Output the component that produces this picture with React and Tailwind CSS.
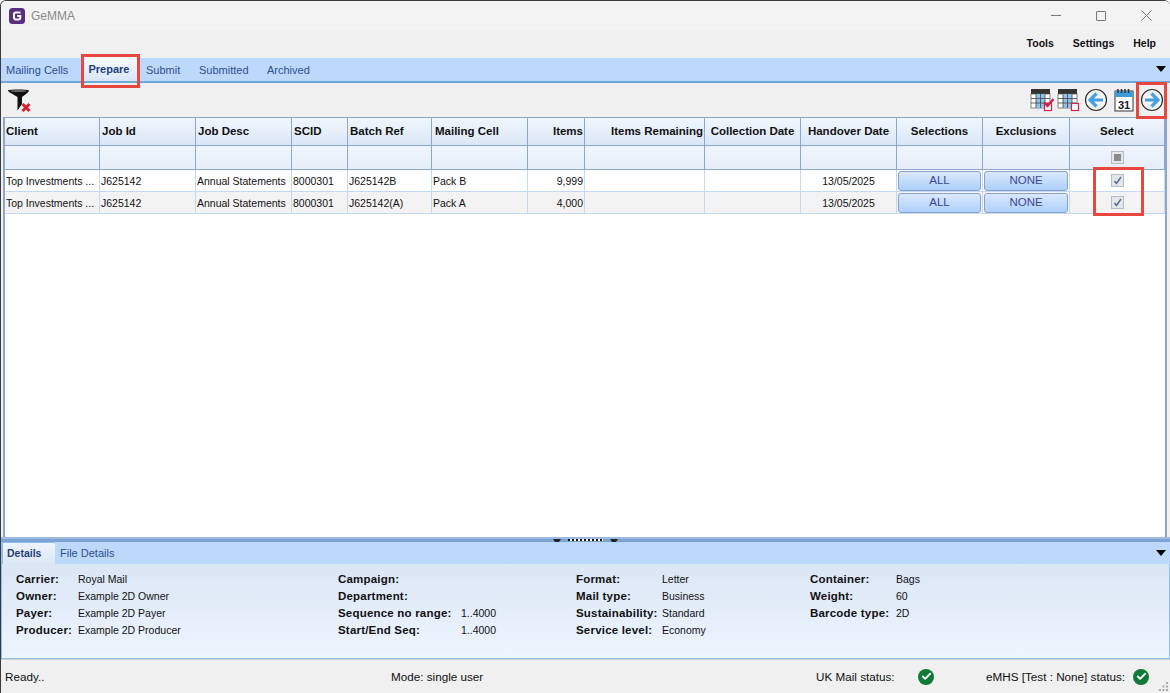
import { Check } from 'lucide-react';

const font = "font-['Liberation_Sans',Arial,sans-serif]";
const gridCols = 'grid grid-cols-[95px_96px_96px_56px_84px_96px_57px_120px_96px_96px_86px_87px_95px]';

const columns = [
  { label: 'Client', align: 'pl-[1px]' },
  { label: 'Job Id', align: 'pl-[2px]' },
  { label: 'Job Desc', align: 'pl-[2px]' },
  { label: 'SCID', align: 'pl-[2px]' },
  { label: 'Batch Ref', align: 'pl-[2px]' },
  { label: 'Mailing Cell', align: 'pl-[3px]' },
  { label: 'Items', align: 'justify-end pr-[1px]' },
  { label: 'Items Remaining', align: 'justify-end pr-[1px]' },
  { label: 'Collection Date', align: 'justify-center' },
  { label: 'Handover Date', align: 'justify-center' },
  { label: 'Selections', align: 'justify-center' },
  { label: 'Exclusions', align: 'justify-center' },
  { label: 'Select', align: 'justify-center' },
];

const rows = [
  { batch: 'J625142B', cell: 'Pack B', items: '9,999', bg: 'bg-white' },
  { batch: 'J625142(A)', cell: 'Pack A', items: '4,000', bg: 'bg-[#f3f3f3]' },
];

const details = [
  {
    width: 'w-[322px]',
    cols: 'grid-cols-[62px_1fr]',
    items: [
      ['Carrier:', 'Royal Mail'],
      ['Owner:', 'Example 2D Owner'],
      ['Payer:', 'Example 2D Payer'],
      ['Producer:', 'Example 2D Producer'],
    ],
  },
  {
    width: 'w-[238px]',
    cols: 'grid-cols-[123px_1fr]',
    items: [
      ['Campaign:', ''],
      ['Department:', ''],
      ['Sequence no range:', '1..4000'],
      ['Start/End Seq:', '1..4000'],
    ],
  },
  {
    width: 'w-[234px]',
    cols: 'grid-cols-[86px_1fr]',
    items: [
      ['Format:', 'Letter'],
      ['Mail type:', 'Business'],
      ['Sustainability:', 'Standard'],
      ['Service level:', 'Economy'],
    ],
  },
  {
    width: 'w-[200px]',
    cols: 'grid-cols-[86px_1fr]',
    items: [
      ['Container:', 'Bags'],
      ['Weight:', '60'],
      ['Barcode type:', '2D'],
    ],
  },
];

const Logo = () => (
  <svg width="16" height="16" viewBox="0 0 16 16">
    <rect width="16" height="16" rx="3.5" fill="#5b2d82" />
    <path d="M11.5 4.6H6.8C5.6 4.6 5 5.3 5 6.4v3.2c0 1.1.6 1.8 1.8 1.8h3c.9 0 1.5-.5 1.5-1.4V8H8.2" fill="none" stroke="#fff" strokeWidth="2" />
  </svg>
);

const FilterClear = () => (
  <svg width="26" height="26" viewBox="0 0 26 26">
    <path d="M1 2.5C1 1 22 1 22 2.5c0 1.500-3 3.500-7 6.500v7l-4.500 6.500V9C6 6 1 4 1 2.500Z" fill="#111" />
    <ellipse cx="11.500" cy="3" rx="8" ry="1" fill="#666" />
    <path d="M15.500 16l7 7M22.500 16l-7 7" stroke="#d5202e" strokeWidth="3" />
  </svg>
);

const GridIcon = ({ checked }) => (
  <svg width="24" height="24" viewBox="0 0 24 24">
    <rect x="1" y="1" width="19" height="5" fill="#333" />
    <rect x="1" y="6" width="19" height="14" fill="#fff" stroke="#555" strokeWidth="0.7" />
    <rect x="6" y="6" width="9" height="14" fill="#8fc4ea" />
    <path d="M1 10.500h19M1 15h19M6 6v14M10.500 6v14M15 6v14" stroke="#444" strokeWidth="0.8" />
    <rect x="14.500" y="15.500" width="7" height="7" fill="#fff" stroke="#d5204a" strokeWidth="1.200" />
    {checked && <path d="M14 14.500l3.500 3.500 6-7" fill="none" stroke="#d5204a" strokeWidth="2.400" />}
  </svg>
);

const ArrowIcon = ({ right }) => (
  <svg width="24" height="24" viewBox="0 0 24 24">
    <circle cx="12" cy="12" r="10.500" fill="#f4f4f4" stroke="#333" strokeWidth="1.200" />
    <g transform={right ? 'rotate(180 12 12)' : undefined}>
      <path d="M12.500 5.500L6 12l6.500 6.500M6.500 12H19" fill="none" stroke="#45a0e0" strokeWidth="3.200" />
    </g>
  </svg>
);

const CalendarIcon = () => (
  <svg width="20" height="24" viewBox="0 0 20 24">
    <rect x="1" y="3" width="18" height="20" fill="#fff" stroke="#333" />
    <rect x="1" y="3" width="18" height="6" fill="#3e9ad8" />
    <path d="M4 1v4M7.500 1v4M11 1v4M14.500 1v4" stroke="#333" strokeWidth="1.500" />
    <text x="10" y="20.500" textAnchor="middle" fontSize="11" fontWeight="700" fontFamily="Liberation Sans" fill="#222">31</text>
  </svg>
);

const SelectBox = ({ mode }) => (
  <span className="flex h-[13px] w-[13px] items-center justify-center border border-[#b4bcc8] bg-[#e3e6eb]">
    {mode === 'mixed' && <span className="h-[7px] w-[7px] bg-[#8c8c8c]" />}
    {mode === 'checked' && (
      <svg width="9" height="9" viewBox="0 0 9 9">
        <path d="M1.500 5l2 2.500L8 1" fill="none" stroke="#5d6f96" strokeWidth="1.500" />
      </svg>
    )}
  </span>
);

const RowButton = ({ children }) => (
  <button className="mx-[1px] flex h-[20px] flex-1 items-center justify-center rounded-[3px] border border-[#8aa3c4] bg-gradient-to-b from-[#d9e8fc] to-[#aed0fb] text-[11.500px] text-[#3f4596]">
    {children}
  </button>
);

const StatusCheck = () => (
  <span className="flex h-4 w-4 items-center justify-center rounded-full bg-[#0f7a35]">
    <Check size={11} strokeWidth={4} color="#fff" />
  </span>
);

const Marker = () => (
  <span className="h-0 w-0 border-x-[4px] border-t-[6px] border-x-transparent border-t-[#222]" />
);

const App = () => {
  return (
    <div className={`${font} relative flex h-[693px] w-[1170px] flex-col overflow-hidden rounded-t-[6px] border-l border-t border-[#3a3a40] bg-[#f0f0f0] text-[10.500px] text-[#111]`}>
      <div className="flex h-[29px] shrink-0 items-center bg-[#f3f3f3] pl-[8px] pr-[18px]">
        <Logo />
        <span className="ml-[6px] text-[12px] text-[#8a8a8a]">GeMMA</span>
        <div className="ml-auto flex items-center gap-[35px]">
          <span className="h-[1px] w-[10px] bg-[#777]" />
          <span className="h-[10px] w-[10px] rounded-[1px] border border-[#777]" />
          <svg width="11" height="11" viewBox="0 0 11 11">
            <path d="M.5.5l10 10M10.500.5l-10 10" stroke="#777" />
          </svg>
        </div>
      </div>

      <div className="flex h-[28px] shrink-0 items-center justify-end gap-[19px] pr-[14px] font-bold">
        <span>Tools</span>
        <span>Settings</span>
        <span>Help</span>
      </div>

      <div className="flex h-[25px] shrink-0 items-end border-b-2 border-[#6fa8d8] bg-[#bcd9fb] pl-[1px] pr-[4px] text-[11px] text-[#2c4f91]">
        <span className="flex h-[22px] w-[79px] items-center pl-[4px]">Mailing Cells</span>
        <span className="flex h-[23px] w-[56px] items-center justify-center rounded-t-[2px] bg-gradient-to-b from-[#f6f9fe] to-[#d8e6f8] font-bold text-[#1f3f7a]">Prepare</span>
        <span className="flex h-[22px] w-[56px] items-center pl-[9px]">Submit</span>
        <span className="flex h-[22px] w-[68px] items-center pl-[6px]">Submitted</span>
        <span className="flex h-[22px] items-center pl-[6px]">Archived</span>
        <span className="ml-auto mb-[9px] h-0 w-0 border-x-[5px] border-t-[6px] border-x-transparent border-t-black" />
      </div>

      <div className="flex h-[34px] shrink-0 items-center pl-[6px] pr-[6px]">
        <span className="mt-[2px]"><FilterClear /></span>
        <div className="ml-auto flex items-center">
          <GridIcon checked />
          <span className="ml-[3px]"><GridIcon /></span>
          <span className="ml-[3px]"><ArrowIcon /></span>
          <span className="ml-[6px]"><CalendarIcon /></span>
          <span className="ml-[6px]"><ArrowIcon right /></span>
        </div>
      </div>

      <div className="ml-[2px] mr-[3px] min-h-0 flex-1 border-x-2 border-t border-[#8ea6c8] bg-white">
        <div className={`${gridCols} h-[28px] border-b border-[#8ea6c8] bg-gradient-to-b from-[#f1f6fd] to-[#dbe7f7] text-[11.500px] font-bold`}>
          {columns.map(col => (
            <div key={col.label} className={`flex items-center border-r border-[#8ea6c8] ${col.align}`}>
              {col.label}
            </div>
          ))}
        </div>
        <div className={`${gridCols} h-[24px] border-b border-[#8ea6c8] bg-gradient-to-b from-[#f1f5fc] to-[#e6eefa]`}>
          {columns.map(col => (
            <div key={col.label} className="flex items-center justify-center border-r border-[#8ea6c8]">
              {col.label === 'Select' && <SelectBox mode="mixed" />}
            </div>
          ))}
        </div>
        {rows.map(row => (
          <div key={row.batch} className={`${gridCols} h-[22px] border-b border-[#c3d8f3] ${row.bg}`}>
            <div className="flex items-center border-r border-[#c3d8f3] pl-[1px] pt-[2px]">Top Investments ...</div>
            <div className="flex items-center border-r border-[#c3d8f3] pl-[1px] pt-[2px]">J625142</div>
            <div className="flex items-center border-r border-[#c3d8f3] pl-[1px] pt-[2px]">Annual Statements</div>
            <div className="flex items-center border-r border-[#c3d8f3] pl-[1px] pt-[2px]">8000301</div>
            <div className="flex items-center border-r border-[#c3d8f3] pl-[1px] pt-[2px]">{row.batch}</div>
            <div className="flex items-center border-r border-[#c3d8f3] pl-[1px] pt-[2px]">{row.cell}</div>
            <div className="flex items-center justify-end border-r border-[#c3d8f3] pr-[1px] pt-[2px]">{row.items}</div>
            <div className="border-r border-[#c3d8f3]" />
            <div className="border-r border-[#c3d8f3]" />
            <div className="flex items-center justify-center border-r border-[#c3d8f3] pt-[2px]">13/05/2025</div>
            <div className="flex items-center border-r border-[#c3d8f3]"><RowButton>ALL</RowButton></div>
            <div className="flex items-center border-r border-[#c3d8f3]"><RowButton>NONE</RowButton></div>
            <div className="flex items-center justify-center border-r border-[#c3d8f3]"><SelectBox mode="checked" /></div>
          </div>
        ))}
      </div>

      <div className="flex h-[5px] shrink-0 items-start justify-center gap-[7px] border-t-2 border-[#9dbbe0] bg-[#7ba3d6]">
        <Marker />
        <span className="h-[2px] w-[35px] bg-[repeating-linear-gradient(90deg,#111_0,#111_2px,#fff_2px,#fff_4px)]" />
        <Marker />
      </div>

      <div className="flex h-[22px] shrink-0 items-end bg-[#bcd9fb] pr-[4px] text-[11px] text-[#2c4f91]">
        <span className="flex h-[22px] w-[54px] items-center rounded-tr-[2px] border-l-2 border-t border-[#8fbfe6] bg-gradient-to-b from-[#eef4fc] to-[#dbe6f5] pl-[4px] text-[10.500px] font-bold text-[#1f3f7a]">Details</span>
        <span className="flex h-[22px] items-center pl-[5px]">File Details</span>
        <span className="ml-auto mb-[8px] h-0 w-0 border-x-[5px] border-t-[6px] border-x-transparent border-t-black" />
      </div>

      <div className="flex h-[95px] shrink-0 border-x border-b border-[#8fbfe6] bg-gradient-to-b from-[#dbe6f5] to-[#edf5fe] pl-[14px] pt-[7px]">
        {details.map((group, i) => (
          <div key={i} className={`grid content-start ${group.cols} ${group.width} auto-rows-[17px]`}>
            {group.items.map(([label, value]) => (
              <div key={label} className="contents">
                <span className="flex items-center whitespace-nowrap text-[11.500px] font-bold tracking-[0.2px]">{label}</span>
                <span className="flex items-center">{value}</span>
              </div>
            ))}
          </div>
        ))}
      </div>

      <div className="flex h-[34px] shrink-0 items-center border-t border-[#cfcfcf] pl-[4px] text-[11.700px]">
        <span className="w-[386px]">Ready..</span>
        <span className="w-[425px]">Mode: single user</span>
        <span className="w-[102px]">UK Mail status:</span>
        <StatusCheck />
        <span className="ml-[52px] w-[147px]">eMHS [Test : None] status:</span>
        <StatusCheck />
      </div>

      <svg className="absolute bottom-[1px] right-[1px]" width="11" height="11" viewBox="0 0 11 11">
        <path d="M8 1h2v2H8zM4.500 4.500h2v2h-2zM8 4.500h2v2H8zM1 8h2v2H1zM4.500 8h2v2h-2zM8 8h2v2H8z" fill="#a8a8a8" />
      </svg>

      <div className="absolute left-[80px] top-[53px] h-[34px] w-[59px] border-[3px] border-[#e8473f]" />
      <div className="absolute left-[1135px] top-[81px] h-[37px] w-[31px] border-[3px] border-[#e8473f]" />
      <div className="absolute left-[1092px] top-[166px] h-[49px] w-[51px] border-[3px] border-[#e8473f]" />
    </div>
  );
};

export default App;
